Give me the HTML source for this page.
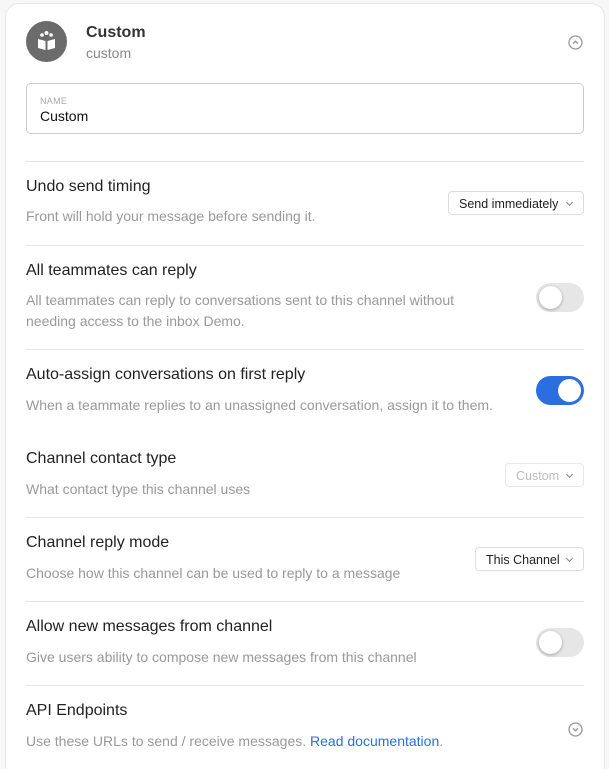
<!DOCTYPE html>
<html style="overflow:hidden;height:769px"><head><style>
body{margin:0;width:609px;height:769px;background:#f7f7f7;font-family:"Liberation Sans",sans-serif;position:relative;overflow:hidden}
.card{position:absolute;left:5px;top:3px;width:598px;height:790px;background:#fff;border:1px solid #e6e6e6;border-radius:14px}
.a{position:absolute}
.t{position:absolute;left:26px;font-size:16px;color:#222}
.d{position:absolute;left:26px;font-size:14px;color:#999;line-height:21px}
.hr{position:absolute;left:26px;width:558px;height:1px;background:#e5e5e5}
.sel{position:absolute;height:24px;border:1px solid #ddd;border-radius:4px;font-size:12.5px;color:#222;line-height:24px;padding-left:10px;box-sizing:border-box;background:#fff}
.sel:after{content:"";position:absolute;right:11px;top:8px;width:4px;height:4px;border-right:1.3px solid #888;border-bottom:1.3px solid #888;transform:rotate(45deg)}
.tg{position:absolute;left:536px;width:48px;height:29px;border-radius:15px;background:#e6e6e6}
.tg i{position:absolute;top:3px;left:3px;width:23px;height:23px;border-radius:50%;background:#fff;box-shadow:0 1px 3px rgba(0,0,0,.3)}
</style></head><body>
<div class="card"></div>
<div class="a" style="left:26px;top:21px;width:41px;height:41px;border-radius:50%;background:#6b6b6b"></div>
<svg class="a" style="left:34px;top:29px" width="25" height="25" viewBox="0 0 25 25"><circle cx="12.5" cy="4" r="2" fill="#fff"/><circle cx="8" cy="6" r="1.8" fill="#fff"/><circle cx="17" cy="6" r="1.8" fill="#fff"/><path d="M4 10 L11.5 12 L11.5 21 L4 19Z M21 10 L13.5 12 L13.5 21 L21 19Z" fill="#fff"/></svg>
<div class="a" style="left:86px;top:24px;font-size:16px;font-weight:bold;color:#333">Custom</div>
<div class="a" style="left:86px;top:45px;font-size:14px;color:#888">custom</div>
<svg class="a" style="left:568px;top:35px" width="15" height="15" viewBox="0 0 15 15"><circle cx="7.5" cy="7.5" r="6.5" fill="none" stroke="#999" stroke-width="1.3"/><path d="M5 8.7 L7.5 6.2 L10 8.7" fill="none" stroke="#999" stroke-width="1.4"/></svg>
<div class="a" style="left:26px;top:83px;width:558px;height:51px;border:1px solid #ccc;border-radius:5px;box-sizing:border-box"></div>
<div class="a" style="left:40px;top:96px;font-size:9px;color:#aaa;letter-spacing:.3px">NAME</div>
<div class="a" style="left:40px;top:108px;font-size:14px;color:#111">Custom</div>
<div class="hr" style="top:161px"></div>
<div class="t" style="top:178px">Undo send timing</div>
<div class="d" style="top:206px">Front will hold your message before sending it.</div>
<div class="sel" style="left:448px;top:191px;width:136px">Send immediately</div>
<div class="hr" style="top:245px"></div>
<div class="t" style="top:262px">All teammates can reply</div>
<div class="d" style="top:290px">All teammates can reply to conversations sent to this channel without<br>needing access to the inbox Demo.</div>
<div class="tg" style="top:283px"><i></i></div>
<div class="hr" style="top:349px"></div>
<div class="t" style="top:366px">Auto-assign conversations on first reply</div>
<div class="d" style="top:395px">When a teammate replies to an unassigned conversation, assign it to them.</div>
<div class="tg" style="top:376px;background:#2b6ee0"><i style="left:22px;box-shadow:none"></i></div>
<div class="t" style="top:450px">Channel contact type</div>
<div class="d" style="top:479px">What contact type this channel uses</div>
<div class="sel" style="left:505px;top:463px;width:79px;color:#bbb;border-color:#e8e8e8">Custom</div>
<div class="hr" style="top:517px"></div>
<div class="t" style="top:534px">Channel reply mode</div>
<div class="d" style="top:563px">Choose how this channel can be used to reply to a message</div>
<div class="sel" style="left:475px;top:547px;width:109px">This Channel</div>
<div class="hr" style="top:601px"></div>
<div class="t" style="top:618px">Allow new messages from channel</div>
<div class="d" style="top:647px">Give users ability to compose new messages from this channel</div>
<div class="tg" style="top:628px"><i></i></div>
<div class="hr" style="top:685px"></div>
<div class="t" style="top:702px">API Endpoints</div>
<div class="d" style="top:731px">Use these URLs to send / receive messages. <span style="color:#2b6ee0">Read documentation</span>.</div>
<svg class="a" style="left:568px;top:722px" width="15" height="15" viewBox="0 0 15 15"><circle cx="7.5" cy="7.5" r="6.5" fill="none" stroke="#999" stroke-width="1.3"/><path d="M5 6.3 L7.5 8.8 L10 6.3" fill="none" stroke="#999" stroke-width="1.4"/></svg>
</body></html>
